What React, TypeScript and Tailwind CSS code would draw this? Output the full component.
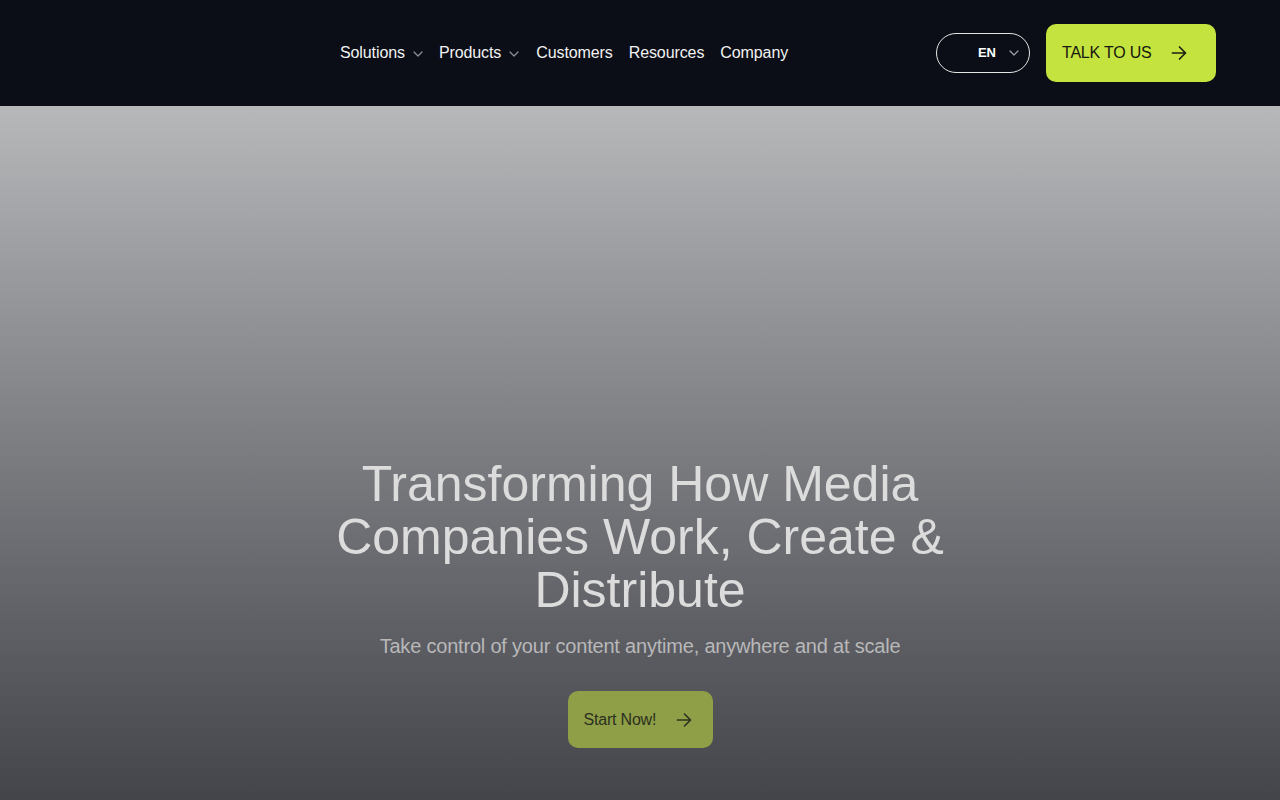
import React from "react";

function Chevron({ className = "" }: { className?: string }) {
  return (
    <svg className={className} width="10" height="6" viewBox="0 0 10 6" fill="none">
      <path d="M1 1l4 4 4-4" stroke="currentColor" strokeWidth="1.2" strokeLinecap="round" strokeLinejoin="round" />
    </svg>
  );
}

function Arrow({ className = "" }: { className?: string }) {
  return (
    <svg className={className} width="16" height="16" viewBox="0 0 16 16" fill="none">
      <path d="M1.5 8h13M8.5 2l6 6-6 6" stroke="currentColor" strokeWidth="1.7" strokeLinecap="round" strokeLinejoin="round" />
    </svg>
  );
}

export default function App() {
  return (
    <div className="min-h-screen bg-[#0b0e16] font-['Liberation_Sans',Arial,sans-serif]">
      <header className="h-[106px] bg-[#0b0e16] flex items-center pl-[340px] pr-[64px]">
        <nav className="flex items-center gap-4 text-[16px] text-[#f2f2f2] tracking-[-0.1px]">
          <span className="flex items-center gap-[8px]">Solutions <Chevron className="text-[#8d9098] mt-[2px]" /></span>
          <span className="flex items-center gap-[8px]">Products <Chevron className="text-[#8d9098] mt-[2px]" /></span>
          <span className="ml-[1px]">Customers</span>
          <span>Resources</span>
          <span>Company</span>
        </nav>
        <div className="ml-auto flex items-center gap-4">
          <div className="h-[40px] w-[94px] rounded-full border border-[#e5e5e5] flex items-center pl-[41px] gap-[13px]">
            <span className="text-[13px] font-bold text-white tracking-[-0.2px]">EN</span>
            <Chevron className="text-[#a0a3aa]" />
          </div>
          <button className="h-[58px] w-[170px] rounded-[10px] bg-[#c5e33e] flex items-center pl-4 gap-[19px] text-[16px] text-[#15170f] tracking-[-0.2px]">
            TALK TO US
            <Arrow className="text-[#1c1f12]" />
          </button>
        </div>
      </header>
      <section className="h-[694px] bg-gradient-to-b from-[#b7b8ba] to-[#44454b] flex flex-col items-center pt-[352px]">
        <h1 className="text-center text-[50px] leading-[53px] text-[#dcdcdc] w-[660px]">
          Transforming How Media Companies Work, Create &amp; Distribute
        </h1>
        <p className="mt-[14px] text-[20px] text-[#b8b8b9] tracking-[-0.2px]">
          Take control of your content anytime, anywhere and at scale
        </p>
        <button className="mt-[30px] h-[57px] w-[145px] rounded-[10px] bg-[#8f9f47] flex items-center pl-4 gap-[20px] text-[16px] text-[#2c3020] tracking-[-0.2px]">
          Start Now!
          <Arrow className="text-[#30341f]" />
        </button>
      </section>
    </div>
  );
}
